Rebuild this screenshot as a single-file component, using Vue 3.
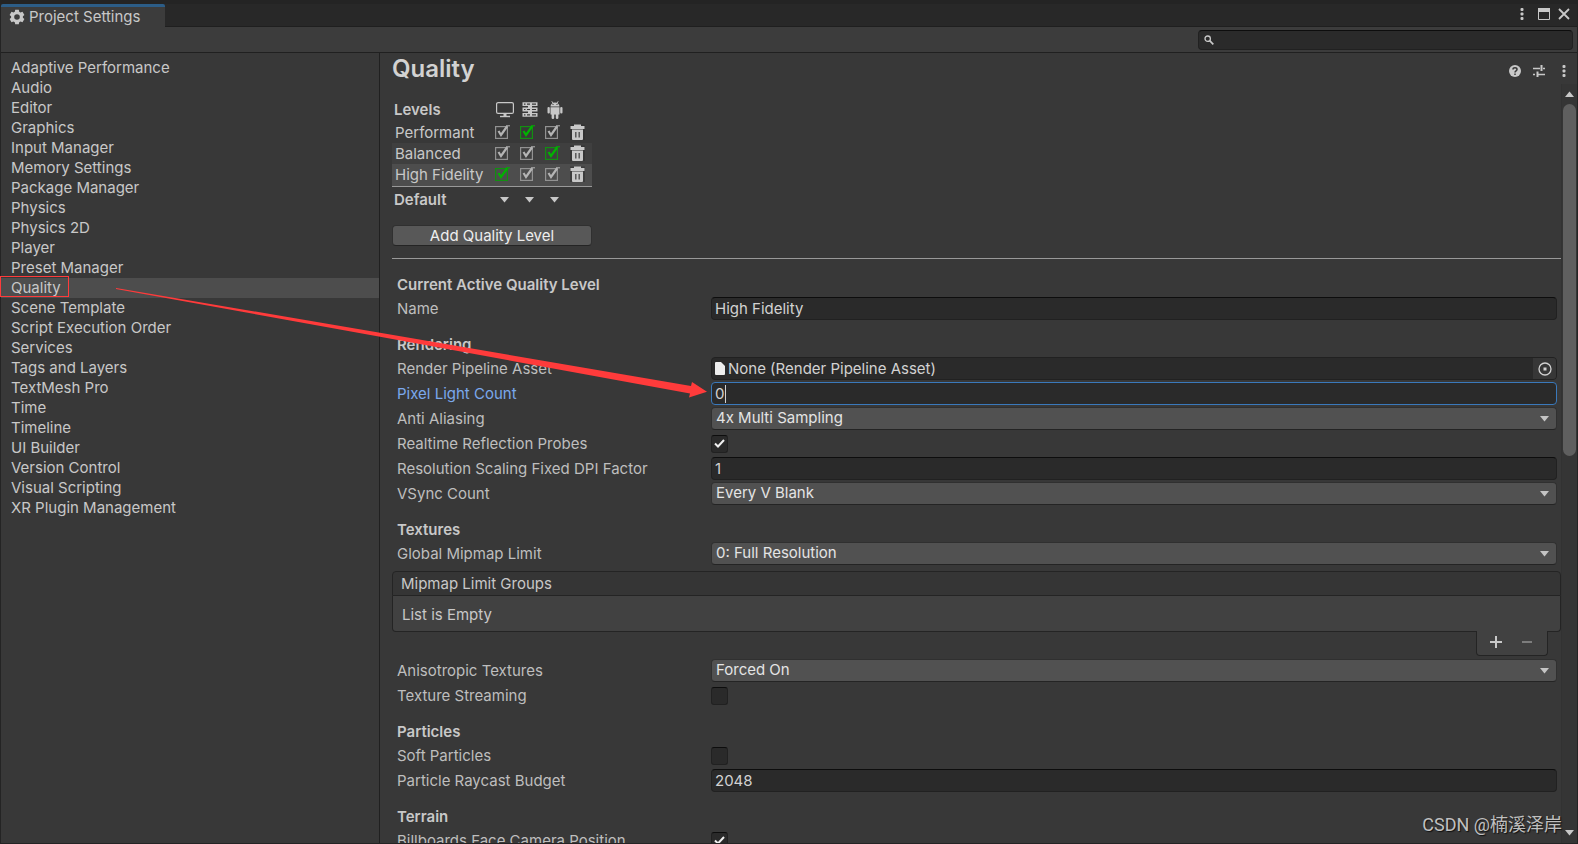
<script setup>
import { ref } from 'vue'

const categories = [
  'Adaptive Performance', 'Audio', 'Editor', 'Graphics', 'Input Manager', 'Memory Settings',
  'Package Manager', 'Physics', 'Physics 2D', 'Player', 'Preset Manager', 'Quality',
  'Scene Template', 'Script Execution Order', 'Services', 'Tags and Layers', 'TextMesh Pro',
  'Time', 'Timeline', 'UI Builder', 'Version Control', 'Visual Scripting', 'XR Plugin Management',
]
const selected = ref('Quality')

const platforms = ['Desktop', 'Server', 'Android']
const levels = [
  { name: 'Performant', preferred: 1 },
  { name: 'Balanced', preferred: 2 },
  { name: 'High Fidelity', preferred: 0 },
]

const sections = ref([
  {
    title: 'Current Active Quality Level',
    rows: [{ id: 'name', label: 'Name', type: 'text', value: 'High Fidelity' }],
  },
  {
    title: 'Rendering',
    rows: [
      { id: 'asset', label: 'Render Pipeline Asset', type: 'object', value: 'None (Render Pipeline Asset)' },
      { id: 'lights', label: 'Pixel Light Count', type: 'text', value: '0', active: true },
      { id: 'aa', label: 'Anti Aliasing', type: 'select', value: '4x Multi Sampling' },
      { id: 'probes', label: 'Realtime Reflection Probes', type: 'check', value: true },
      { id: 'dpi', label: 'Resolution Scaling Fixed DPI Factor', type: 'text', value: '1' },
      { id: 'vsync', label: 'VSync Count', type: 'select', value: 'Every V Blank' },
    ],
  },
  {
    title: 'Textures',
    rows: [
      { id: 'mip', label: 'Global Mipmap Limit', type: 'select', value: '0: Full Resolution' },
      { id: 'groups', type: 'list' },
      { id: 'aniso', label: 'Anisotropic Textures', type: 'select', value: 'Forced On' },
      { id: 'streaming', label: 'Texture Streaming', type: 'check', value: false },
    ],
  },
  {
    title: 'Particles',
    rows: [
      { id: 'soft', label: 'Soft Particles', type: 'check', value: false },
      { id: 'raycast', label: 'Particle Raycast Budget', type: 'text', value: '2048' },
    ],
  },
  {
    title: 'Terrain',
    rows: [{ id: 'billboards', label: 'Billboards Face Camera Position', type: 'check', value: true }],
  },
])
</script>

<template>
  <div class="window">
    <header class="tabbar">
      <div class="tab">
        <svg width="16" height="16" viewBox="0 0 16 16" fill="currentColor" fill-rule="evenodd">
          <path d="M6.200.700h3.600l.4 2 1.300.7 2-.7 1.900 3.200-1.500 1.400v1.400l1.500 1.400-1.900 3.200-2-.7-1.300.7-.4 2H6.200l-.4-2-1.300-.7-2 .7-1.900-3.200 1.500-1.400V7.300L.6 5.900l1.900-3.200 2 .7 1.300-.7zM8 5.200a2.800 2.800 0 1 0 0 5.600 2.800 2.800 0 0 0 0-5.600z" />
        </svg>
        <span>Project Settings</span>
      </div>
      <div class="window-buttons">
        <button aria-label="Window menu">
          <svg width="4" height="14" viewBox="0 0 4 14" fill="currentColor"><rect x=".5" y="1" width="3" height="3" rx="1" /><rect x=".5" y="5.500" width="3" height="3" rx="1" /><rect x=".5" y="10" width="3" height="3" rx="1" /></svg>
        </button>
        <button aria-label="Maximize">
          <svg width="12" height="12" viewBox="0 0 12 12" fill="none" stroke="currentColor"><path d="M.5.500h11v11H.5z" /><path d="M0 2h12" stroke-width="4" /></svg>
        </button>
        <button aria-label="Close">
          <svg width="12" height="12" viewBox="0 0 12 12" fill="none" stroke="currentColor" stroke-width="1.800"><path d="M1 1l10 10M11 1L1 11" /></svg>
        </button>
      </div>
    </header>

    <div class="toolbar">
      <label class="search">
        <svg width="10" height="10" viewBox="0 0 10 10" fill="none" stroke="currentColor"><circle cx="3.700" cy="3.700" r="2.700" stroke-width="1.300" /><path d="M5.700 5.700L9.300 9.300" stroke-width="1.700" /></svg>
        <input type="text" aria-label="Search settings" />
      </label>
    </div>

    <div class="body">
      <nav class="sidebar">
        <a v-for="c in categories" :key="c" href="#" :class="{ selected: c === selected }" @click.prevent="selected = c">{{ c }}</a>
      </nav>

      <main class="panel">
        <div class="heading">
          <h1>Quality</h1>
          <div class="heading-buttons">
            <button aria-label="Help">
              <svg width="12" height="12" viewBox="0 0 12 12"><circle cx="6" cy="6" r="6" fill="currentColor" /><path d="M4 4.500C4 2.300 8 2.300 8 4.500 8 5.800 6 5.800 6 7.400M6 8.500v1.500" fill="none" stroke="#383838" stroke-width="1.500" /></svg>
            </button>
            <button aria-label="Presets">
              <svg width="12" height="12" viewBox="0 0 12 12" fill="none" stroke="currentColor"><path d="M0 3.500h7M10 3.500h2M0 9.500h2M5 9.500h7" stroke-width="1.300" /><path d="M8.500 0v6M4.500 6.500v5.500" stroke-width="2" /></svg>
            </button>
            <button aria-label="More">
              <svg width="4" height="14" viewBox="0 0 4 14" fill="currentColor"><rect x=".5" y="1" width="3" height="3" rx="1" /><rect x=".5" y="5.500" width="3" height="3" rx="1" /><rect x=".5" y="10" width="3" height="3" rx="1" /></svg>
            </button>
          </div>
        </div>

        <div class="scroll">
          <div class="content">
            <table class="levels">
              <thead>
                <tr>
                  <th scope="col">Levels</th>
                  <th scope="col" aria-label="Desktop">
                    <svg width="18" height="18" viewBox="0 0 18 18" fill="none" stroke="currentColor"><rect x=".6" y="1.600" width="16.800" height="10.800" rx="1.500" stroke-width="1.200" /><path d="M9 12.500v3" stroke-width="3" /><path d="M4 15.500h10" stroke-width="1.400" /></svg>
                  </th>
                  <th scope="col" aria-label="Server">
                    <svg width="18" height="18" viewBox="0 0 18 18"><path d="M1.500 1.200h15v3.800h-15zM1.500 6.600h15v3.800h-15zM1.500 12h15v3.800h-15z" fill="currentColor" /><path d="M9 4v9" stroke="currentColor" stroke-width="4" /><path d="M3 3.100h1.500M6 3.100h3M11 3.100h4M3 8.500h1.500M6 8.500h3M11 8.500h4M3 13.900h1.500M6 13.900h3M11 13.900h4" stroke="#383838" stroke-width="1.200" /></svg>
                  </th>
                  <th scope="col" aria-label="Android">
                    <svg width="18" height="18" viewBox="0 0 18 18" fill="currentColor"><path d="M4.500 5.500a4.500 4 0 0 1 9 0zM4.500 6.300h9v7.200h-9z" /><rect x="1.500" y="6" width="2.300" height="6.500" rx="1.100" /><rect x="14.200" y="6" width="2.300" height="6.500" rx="1.100" /><rect x="5.600" y="12" width="2.600" height="6" rx="1.200" /><rect x="9.800" y="12" width="2.600" height="6" rx="1.200" /><path d="M5.800.3l1.400 2M12.200.3l-1.400 2" stroke="currentColor" /><path d="M6.500 3.500h1M10.500 3.500h1" stroke="#383838" /></svg>
                  </th>
                  <th></th>
                </tr>
              </thead>
              <tbody>
                <tr v-for="level in levels" :key="level.name">
                  <th scope="row">{{ level.name }}</th>
                  <td v-for="(p, i) in platforms" :key="p">
                    <span class="tick" :class="{ preferred: level.preferred === i }">
                      <input type="checkbox" checked :aria-label="`${level.name} on ${p}`" />
                      <svg width="15" height="15" viewBox="0 0 15 15" fill="none" stroke="currentColor"><rect class="frame" x=".600" y="1.600" width="11.800" height="11.800" stroke-width="1.200" /><path d="M3.500 6L6 10 12 1.500" stroke-width="2.200" /><path d="M11 .800h4" stroke-width="1" /></svg>
                    </span>
                  </td>
                  <td>
                    <button class="trash" :aria-label="`Delete ${level.name}`">
                      <svg width="15" height="18" viewBox="0 0 15 18"><path d="M0 .500h15v15.500H0z" fill="#2c2c2c" opacity=".5" /><path d="M4 .500h7v1.500h3.500v3H.5V2H4z" fill="currentColor" /><path d="M2 5.500h11v9.500a1 1 0 0 1-1 1H3a1 1 0 0 1-1-1z" fill="currentColor" /><path d="M5.800 8v5.500M9.200 8v5.500" stroke="#505050" stroke-width="1.400" /></svg>
                    </button>
                  </td>
                </tr>
              </tbody>
              <tfoot>
                <tr>
                  <th scope="row">Default</th>
                  <td v-for="p in platforms" :key="p">
                    <button class="drop" :aria-label="`Default level for ${p}`">
                      <svg width="10" height="6" viewBox="0 0 10 6" fill="currentColor"><path d="M0 0h9L4.500 5.500z" /></svg>
                    </button>
                  </td>
                  <td></td>
                </tr>
              </tfoot>
            </table>

            <button class="add">Add Quality Level</button>
            <hr />

            <section v-for="s in sections" :key="s.title" class="group">
              <h2>{{ s.title }}</h2>
              <template v-for="row in s.rows" :key="row.id">
                <div v-if="row.type === 'list'" class="list">
                  <h3>Mipmap Limit Groups</h3>
                  <p>List is Empty</p>
                  <div class="list-footer">
                    <button aria-label="Add group">
                      <svg width="12" height="12" viewBox="0 0 12 12" stroke="currentColor" stroke-width="2"><path d="M6 0v12M0 6h12" /></svg>
                    </button>
                    <button aria-label="Remove group" disabled>
                      <svg width="10" height="12" viewBox="0 0 10 12" stroke="currentColor" stroke-width="2"><path d="M0 6h10" /></svg>
                    </button>
                  </div>
                </div>
                <div v-else class="row" :class="{ active: row.active }">
                  <label :for="row.id">{{ row.label }}</label>
                  <div v-if="row.type === 'text'" class="field">
                    <input :id="row.id" v-model="row.value" type="text" />
                    <span v-if="row.active" class="caret"></span>
                  </div>
                  <div v-else-if="row.type === 'object'" class="field object">
                    <svg width="10" height="13" viewBox="0 0 10 13" fill="#ededed"><path d="M1 0h5l4 4v8a1 1 0 0 1-1 1H1a1 1 0 0 1-1-1V1a1 1 0 0 1 1-1z" /></svg>
                    <input :id="row.id" :value="row.value" type="text" readonly />
                    <button aria-label="Select asset">
                      <svg width="14" height="14" viewBox="0 0 14 14" fill="none" stroke="currentColor" stroke-width="1.300"><circle cx="7" cy="7" r="6" /><rect x="5.500" y="5.500" width="3" height="3" fill="currentColor" stroke="none" /></svg>
                    </button>
                  </div>
                  <div v-else-if="row.type === 'select'" class="select">
                    <select :id="row.id"><option>{{ row.value }}</option></select>
                    <svg width="10" height="6" viewBox="0 0 10 6" fill="currentColor"><path d="M0 0h9L4.500 5.500z" /></svg>
                  </div>
                  <div v-else class="check">
                    <input :id="row.id" v-model="row.value" type="checkbox" />
                    <svg v-if="row.value" width="11" height="9" viewBox="0 0 11 9" fill="none" stroke="#f0f0f0" stroke-width="2"><path d="M1 4.500L4 7.500 10 1" /></svg>
                  </div>
                </div>
              </template>
            </section>
          </div>

          <div class="scrollbar">
            <svg width="10" height="6" viewBox="0 0 10 6" fill="currentColor"><path d="M0 6h9L4.500.500z" /></svg>
            <div class="track"><div class="thumb"></div></div>
            <svg width="10" height="6" viewBox="0 0 10 6" fill="currentColor"><path d="M0 0h9L4.500 5.500z" /></svg>
          </div>
        </div>
      </main>
    </div>

    <svg class="annotation" fill="none">
      <rect x=".5" y="276.500" width="68" height="20" stroke="#ff3b3b" />
      <path d="M116 288L380 332.700 691 386 692 382 707 391.700 689 397.500 690 393.500 380 336.700 116 289z" fill="#ff3b3b" />
    </svg>
    <div class="watermark">CSDN @楠溪泽岸</div>
  </div>
</template>

<style>
body {
  margin: 0;
  background: #242424;
}
</style>

<style scoped>
* {
  box-sizing: border-box;
}

.window {
  position: relative;
  display: flex;
  flex-direction: column;
  height: 100vh;
  padding: 4px 1px 1px;
  overflow: hidden;
  background: #242424;
  color: #c8c8c8;
  font: 15px/20px Inter, "Liberation Sans", sans-serif;
}

svg {
  display: block;
  flex: none;
}

button,
input,
select {
  margin: 0;
  padding: 0;
  border: 0;
  outline: 0;
  background: none;
  color: inherit;
  font: inherit;
}

input[type="checkbox"],
select {
  appearance: none;
}

.tabbar {
  display: flex;
  justify-content: space-between;
  height: 23px;
  border-bottom: 1px solid #1f1f1f;
  background: #282828;
}

.tab {
  display: flex;
  align-items: center;
  gap: 4px;
  height: 23px;
  padding: 0 25px 0 8px;
  border-top: 3px solid #2c5d87;
  border-radius: 2px 2px 0 0;
  background: #3c3c3c;
}

.window-buttons {
  display: flex;
  align-items: center;
  gap: 14px;
  padding: 0 7px 2px 0;
}

.window-buttons button:last-child {
  margin-left: -6px;
}

.toolbar {
  display: flex;
  justify-content: flex-end;
  height: 26px;
  padding: 3px 4px 2px;
  border-bottom: 1px solid #202020;
  background: #3c3c3c;
}

.search {
  display: flex;
  align-items: center;
  gap: 6px;
  width: 375px;
  padding: 0 5px;
  border: 1px solid #212121;
  border-top-color: #0d0d0d;
  border-radius: 4px;
  background: #2a2a2a;
}

.search input {
  flex: 1;
}

.body {
  display: flex;
  flex: 1;
  min-height: 0;
  background: #383838;
}

.sidebar {
  display: flex;
  flex-direction: column;
  flex: none;
  width: 379px;
  padding-top: 5px;
  border-right: 1px solid #202020;
}

.sidebar a {
  padding-left: 10px;
  color: inherit;
  text-decoration: none;
}

.sidebar a.selected {
  background: #4d4d4d;
}

.panel {
  display: flex;
  flex: 1;
  flex-direction: column;
  min-width: 0;
}

.heading {
  display: flex;
  flex: none;
  justify-content: space-between;
  height: 31px;
  padding: 0 11px 0 12px;
}

h1,
h2,
h3,
p {
  margin: 0;
}

h1 {
  color: #d2d2d2;
  font-size: 24px;
  font-weight: 600;
  line-height: 32px;
}

.heading-buttons {
  display: flex;
  align-items: center;
  gap: 12px;
  padding-top: 5px;
}

.heading-buttons button:last-child {
  margin-left: 5px;
}

.scroll {
  display: flex;
  flex: 1;
  min-height: 0;
}

.content {
  flex: 1;
  min-width: 0;
  padding: 15px 0 0 12px;
  overflow: hidden;
}

.levels {
  width: 200px;
  table-layout: fixed;
  border-collapse: collapse;
}

.levels th,
.levels td {
  height: 21px;
  padding: 0 0 0 5px;
  text-align: left;
}

.levels th:first-child {
  width: 98px;
  padding-left: 3px;
  font-weight: 400;
  white-space: nowrap;
}

.levels thead th {
  width: 25px;
  height: 23px;
  padding: 0 0 2px 6px;
}

.levels thead th:last-child {
  width: 27px;
}

.levels thead th:first-child,
.levels tfoot th:first-child {
  padding-left: 2px;
  font-weight: 600;
}

.levels tbody tr:nth-child(2) {
  background: #3f3f3f;
}

.levels tbody tr:nth-child(3) {
  border-bottom: 1px solid #999;
  background: #4d4d4d;
}

.levels tbody tr:nth-child(3) > * {
  height: 22px;
}

.levels tfoot th,
.levels tfoot td {
  height: 28px;
}

.levels tfoot td {
  padding-left: 10px;
}

.tick {
  display: grid;
  width: 15px;
  color: #b4b4b4;
}

.tick > * {
  grid-area: 1 / 1;
}

.tick input {
  width: 15px;
  height: 15px;
}

.tick svg {
  pointer-events: none;
}

.tick .frame {
  stroke: #929292;
}

.tick.preferred {
  color: #00b400;
}

.tick.preferred .frame {
  stroke: #128f12;
}

.trash,
.drop {
  display: block;
}

.add {
  display: block;
  width: 200px;
  height: 21px;
  margin-top: 11px;
  border: 1px solid #303030;
  border-bottom-color: #242424;
  border-radius: 4px;
  background: #585858;
  color: #eee;
  line-height: 19px;
}

hr {
  height: 1px;
  margin: 12px 0 2px;
  border: 0;
  background: #999;
}

.group h2 {
  padding: 13px 5px 0;
  font-size: 15px;
  font-weight: 600;
  line-height: 22px;
}

.row {
  display: flex;
  align-items: center;
  height: 25px;
  padding: 1px 4px 1px 5px;
}

.row label {
  flex: none;
  width: 314px;
  color: #bebebe;
}

.row.active label {
  color: #7ba8ec;
}

.field,
.select {
  display: flex;
  flex: 1;
  align-items: center;
  height: 23px;
  border: 1px solid #212121;
  border-radius: 4px;
  color: #d2d2d2;
}

.field {
  padding-left: 3px;
  border-top-color: #0d0d0d;
  background: #2a2a2a;
}

.field input {
  flex: 1;
  min-width: 0;
}

.active .field {
  border-color: #3a79bb;
}

.active .field input {
  flex: none;
  width: 10px;
}

.caret {
  width: 1px;
  height: 18px;
  background: #d2d2d2;
}

.object {
  gap: 3px;
  border-top-color: #212121;
}

.object button {
  display: grid;
  place-items: center;
  width: 23px;
  height: 21px;
  border-radius: 0 3px 3px 0;
  background: #373737;
}

.select {
  border-color: #303030;
  border-bottom-color: #242424;
  background: #515151;
  color: #e4e4e4;
}

.select select {
  flex: 1;
  height: 21px;
  margin-right: -16px;
  padding: 0 16px 2px 4px;
}

.select svg {
  margin-right: 6px;
  color: #c4c4c4;
  pointer-events: none;
}

.check {
  display: grid;
  place-items: center;
  width: 17px;
  height: 18px;
}

.check > * {
  grid-area: 1 / 1;
}

.check input {
  width: 17px;
  height: 18px;
  border: 1px solid #212121;
  border-top-color: #0d0d0d;
  border-radius: 3px;
  background: #2a2a2a;
}

.check svg {
  pointer-events: none;
}

.list {
  margin: 5px 0 2px;
}

.list h3 {
  height: 25px;
  padding-left: 8px;
  border: 1px solid #242424;
  border-radius: 4px 4px 0 0;
  background: #353535;
  font-size: 15px;
  font-weight: 400;
  line-height: 24px;
}

.list p {
  height: 36px;
  padding-left: 9px;
  border: 1px solid #242424;
  border-top: 0;
  border-radius: 0 0 4px 4px;
  background: #414141;
  line-height: 38px;
}

.list-footer {
  display: flex;
  justify-content: space-around;
  width: 72px;
  height: 25px;
  margin: -1px 13px 0 auto;
  padding: 0 5px 2px 3px;
  border: 1px solid #242424;
  border-top: 0;
  border-radius: 0 0 4px 4px;
  background: #414141;
}

.list-footer button:disabled {
  color: #7d7d7d;
}

.scrollbar {
  display: flex;
  flex: none;
  flex-direction: column;
  align-items: center;
  gap: 7px;
  width: 16px;
  padding: 7px 1px 7px 1px;
  border-left: 1px solid #323232;
  background: #353535;
}

.track {
  flex: 1;
  width: 13px;
}

.thumb {
  height: 49%;
  border-radius: 7px;
  background: #5f5f5f;
}

.annotation {
  position: absolute;
  inset: 0;
  width: 100%;
  height: 100%;
  pointer-events: none;
}

.watermark {
  position: absolute;
  right: 16px;
  bottom: 6px;
  color: #c0c0c0;
  font: 18px/26px Roboto, "Noto Sans CJK SC", sans-serif;
  text-shadow: 1px 1px 1px #111;
}
</style>
